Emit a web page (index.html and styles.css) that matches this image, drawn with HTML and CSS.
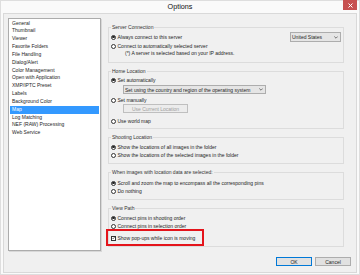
FILE: index.html
```html
<!DOCTYPE html>
<html lang="en">
<head>
    <meta charset="UTF-8">
    <meta name="viewport" content="width=device-width, initial-scale=1.0">
    <title>Options</title>
    <link rel="stylesheet" href="styles.css">
</head>
<body>
    <div class="window">
        <div class="titlebar">
            <span class="title">Options</span>
            <button class="close" aria-label="Close">
                <svg width="5" height="5" viewBox="0 0 5 5"><path d="M0.5 0.5 L4.5 4.5 M4.5 0.5 L0.5 4.5" stroke="#fff" stroke-width="1"/></svg>
            </button>
        </div>
        <div class="client">
            <div class="panes">
                <ul class="nav">
                    <li>General</li>
                    <li>Thumbnail</li>
                    <li>Viewer</li>
                    <li>Favorite Folders</li>
                    <li>File Handling</li>
                    <li>Dialog/Alert</li>
                    <li>Color Management</li>
                    <li>Open with Application</li>
                    <li>XMP/IPTC Preset</li>
                    <li>Labels</li>
                    <li>Background Color</li>
                    <li class="selected">Map</li>
                    <li>Log Matching</li>
                    <li>NEF (RAW) Processing</li>
                    <li>Web Service</li>
                </ul>

                <div class="groups">
                    <fieldset class="group group-server">
                        <legend>Server Connection</legend>
                        <div class="opt tall">
                            <span class="radio on"></span>Always connect to this server
                            <div class="select country">
                                <span>United States</span>
                                <svg class="arrow" width="4" height="3" viewBox="0 0 4 3"><path d="M0.3 0.5 L2 2.2 L3.7 0.5" fill="none" stroke="#444" stroke-width="0.7"/></svg>
                            </div>
                        </div>
                        <div class="opt"><span class="radio"></span>Connect to automatically selected server</div>
                        <div class="note">(*) A server is selected based on your IP address.</div>
                    </fieldset>

                    <fieldset class="group group-home">
                        <legend>Home Location</legend>
                        <div class="opt"><span class="radio on"></span>Set automatically</div>
                        <div class="select region">
                            <span>Set using the country and region of the operating system</span>
                            <svg class="arrow" width="4" height="3" viewBox="0 0 4 3"><path d="M0.3 0.5 L2 2.2 L3.7 0.5" fill="none" stroke="#444" stroke-width="0.7"/></svg>
                        </div>
                        <div class="opt spaced"><span class="radio"></span>Set manually</div>
                        <button class="sub-btn" disabled>Use Current Location</button>
                        <div class="opt spaced-lg"><span class="radio"></span>Use world map</div>
                    </fieldset>

                    <fieldset class="group group-shooting">
                        <legend>Shooting Location</legend>
                        <div class="opt"><span class="radio on"></span>Show the locations of all images in the folder</div>
                        <div class="opt"><span class="radio"></span>Show the locations of the selected images in the folder</div>
                    </fieldset>

                    <fieldset class="group group-select">
                        <legend>When images with location data are selected:</legend>
                        <div class="opt"><span class="radio on"></span>Scroll and zoom the map to encompass all the corresponding pins</div>
                        <div class="opt"><span class="radio"></span>Do nothing</div>
                    </fieldset>

                    <fieldset class="group group-path">
                        <legend>View Path</legend>
                        <div class="opt"><span class="radio on"></span>Connect pins in shooting order</div>
                        <div class="opt"><span class="radio"></span>Connect pins in selection order</div>
                        <div class="opt check-row">
                            <span class="checkbox">
                                <svg width="4" height="4" viewBox="0 0 4 4"><path d="M0.5 2 L1.5 3.1 L3.5 0.7" fill="none" stroke="#222" stroke-width="0.8"/></svg>
                            </span>Show pop-ups while icon is moving
                        </div>
                    </fieldset>
                </div>
            </div>

            <div class="footer">
                <button class="btn default">OK</button>
                <button class="btn">Cancel</button>
            </div>
        </div>
    </div>
</body>
</html>
```

FILE: styles.css
```css
/* General */
body {
    margin: 0;
    font-family: "Liberation Sans", Arial, sans-serif;
    font-size: 5px;
    color: #1e1e1e;
    background: #fafafa;
}

.window {
    width: 360px;
    height: 275px;
    box-sizing: border-box;
    padding: 0 3px 2px;
    background: #fafafa;
    box-shadow: inset 0 0 0 1px #dedede;
}

/* Title bar */
.titlebar {
    height: 13px;
    display: grid;
    grid-template-columns: 1fr auto 1fr;
    align-items: start;
}

.title {
    grid-column: 2;
    font-size: 7.2px;
    line-height: 13px;
    color: #111;
}

.close {
    grid-column: 3;
    justify-self: end;
    width: 14px;
    height: 10px;
    padding: 0;
    border: none;
    background: #c75050;
    display: flex;
    align-items: center;
    justify-content: center;
}

/* Client area */
.client {
    height: 260px;
    box-sizing: border-box;
    border: 1px solid #d9d9d9;
    background: #f0f0f0;
    padding: 4px 5px 0 4px;
}

.panes {
    display: flex;
    align-items: flex-start;
}

/* Category list */
.nav {
    list-style: none;
    margin: 0;
    padding: 0.5px 1px;
    width: 93px;
    height: 233px;
    box-sizing: border-box;
    background: #fff;
    border: 1px solid #acacac;
    box-shadow: 1px 1px 0 #d8d8d8;
}

.nav li {
    height: 7.857px;
    line-height: 7.857px;
    padding-left: 2px;
    white-space: nowrap;
}

.nav li.selected {
    background: #3399ff;
    color: #fff;
}

/* Group boxes */
.groups {
    width: 236px;
    margin: 6px 0 0 7px;
}

.group {
    margin: 0 0 5px;
    padding: 2px 2px 5px 2px;
    border: 1px solid #dcdcdc;
    min-width: 0;
}

.group legend {
    padding: 0 1px;
    line-height: 6px;
    color: #333;
}

.group-home { padding-bottom: 3px; }
.group-shooting { padding-top: 3px; padding-bottom: 4px; }
.group-select { padding-top: 4px; padding-bottom: 4px; }
.group-path { padding-top: 3px; padding-bottom: 4px; margin-bottom: 0; }

.opt {
    display: flex;
    align-items: center;
    height: 8px;
    white-space: nowrap;
}

.opt.tall { height: 10px; }
.opt.spaced { margin-top: 2px; }
.opt.spaced-lg { margin-top: 4px; }

.radio {
    width: 5px;
    height: 5px;
    box-sizing: border-box;
    border: 0.8px solid #333;
    border-radius: 50%;
    background: #fff;
    margin-right: 1.5px;
    display: flex;
    align-items: center;
    justify-content: center;
    flex-shrink: 0;
}

.radio.on::after {
    content: "";
    width: 2.4px;
    height: 2.4px;
    border-radius: 50%;
    background: #222;
}

.checkbox {
    width: 5px;
    height: 5px;
    box-sizing: border-box;
    border: 0.8px solid #333;
    background: #fff;
    margin-right: 1.5px;
    display: flex;
    align-items: center;
    justify-content: center;
    flex-shrink: 0;
}

.note {
    height: 7px;
    line-height: 7px;
    margin-left: 14px;
}

/* Dropdowns */
.select {
    display: flex;
    align-items: center;
    justify-content: space-between;
    box-sizing: border-box;
    border: 1px solid #adadad;
    background: #e5e5e5;
    padding: 0 2px 0 1px;
}

.select.country {
    width: 51px;
    height: 10px;
    margin-left: auto;
}

.select.region {
    width: 143px;
    height: 9px;
    margin: 1px 0 0 12px;
}

.sub-btn {
    display: block;
    width: 65px;
    height: 9px;
    margin-left: 12px;
    padding: 0;
    border: 1px solid #bfbfbf;
    background: #ececec;
    color: #a0a0a0;
    font: inherit;
}

/* Highlighted option */
.check-row {
    margin-top: 4px;
    position: relative;
}

.check-row::after {
    content: "";
    position: absolute;
    left: -5px;
    top: -5px;
    width: 98px;
    height: 17px;
    box-sizing: border-box;
    border: 2px solid #e4141b;
}

/* Footer buttons */
.footer {
    display: flex;
    justify-content: flex-end;
    gap: 3px;
    margin-top: 6px;
}

.btn {
    width: 36px;
    height: 9px;
    padding: 0;
    border: 1px solid #adadad;
    background: #e1e1e1;
    color: #1e1e1e;
    font: inherit;
}

.btn.default {
    border-color: #0078d7;
}
```
